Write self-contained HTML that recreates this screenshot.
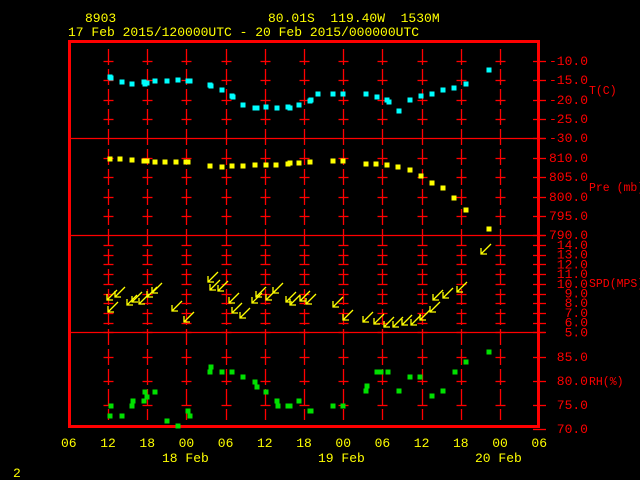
<!DOCTYPE html>
<html><head><meta charset="utf-8"><style>
html,body{margin:0;padding:0;background:#000;width:640px;height:480px;overflow:hidden}
svg{display:block}
text{font-family:"Liberation Mono",monospace;font-size:13px}
.y{fill:#ffff00}.r{fill:#ff0000}
</style></head><body>
<svg width="640" height="480" viewBox="0 0 640 480" xmlns="http://www.w3.org/2000/svg">
<rect width="640" height="480" fill="#000"/>
<text x="85" y="22" class="y">8903</text>
<text x="268" y="22" class="y" xml:space="preserve">80.01S  119.40W  1530M</text>
<text x="68" y="36" class="y">17 Feb 2015/120000UTC - 20 Feb 2015/000000UTC</text>
<g id="grid" stroke="#ff0000" stroke-width="1.3"></g>
<rect x="69.5" y="41.5" width="469" height="385" fill="none" stroke="#ff0000" stroke-width="3"/>
<g stroke="#ff0000" stroke-width="1.3">
<line x1="69" y1="138.5" x2="545" y2="138.5"/>
<line x1="69" y1="235.5" x2="545" y2="235.5"/>
<line x1="69" y1="332.5" x2="545" y2="332.5"/>
</g>
<g id="lab" class="r" style="font-size:11.5px" text-anchor="end"></g>
<text x="589" y="94" class="r" style="font-size:11.5px">T(C)</text>
<text x="589" y="191" class="r" style="font-size:11.5px">Pre (mb)</text>
<text x="589" y="287" class="r" style="font-size:11.5px">SPD(MPS)</text>
<text x="589" y="385" class="r" style="font-size:11.5px">RH(%)</text>
<g id="hrs" class="y"></g>
<text x="162" y="462" class="y">18 Feb</text>
<text x="318" y="462" class="y">19 Feb</text>
<text x="475" y="462" class="y">20 Feb</text>
<text x="13" y="477" class="y">2</text>
<g id="pts"></g>
<g id="wind" stroke="#ffff00" stroke-width="1.3" fill="none"></g>
<script>
var NS="http://www.w3.org/2000/svg";
function el(p,t,a,txt){var e=document.createElementNS(NS,t);for(var k in a)e.setAttribute(k,a[k]);if(txt!==undefined)e.textContent=txt;p.appendChild(e);return e;}
var g=document.getElementById('grid');
var xs=[];for(var i=0;i<11;i++)xs.push(Math.round(108+39.2*i)+0.5);
var ys=[];
[61,80,100,119,158,177,197,216].forEach(function(y){ys.push(y)});
for(var i=0;i<10;i++)ys.push(245+i*9.7);
[357,381,405].forEach(function(y){ys.push(y)});
xs.forEach(function(x){
 el(g,'line',{x1:x,y1:49,x2:x,y2:420,'stroke-dasharray':'16 4'});
 ys.forEach(function(y){el(g,'line',{x1:x-5,y1:Math.round(y)+.5,x2:x+5,y2:Math.round(y)+.5});});
});
var allTicks=[61,80,100,119,138,158,177,197,216,235];for(var i=1;i<10;i++)allTicks.push(245+ (i-1)*9.7);
allTicks=allTicks.concat([332,357,381,405,429]);
allTicks.forEach(function(y){el(g,'line',{x1:533,y1:Math.round(y)+.5,x2:546,y2:Math.round(y)+.5});});
var lab=document.getElementById('lab');
var L=[[61,'-10.0'],[80,'-15.0'],[100,'-20.0'],[119,'-25.0'],[138,'-30.0'],[158,'810.0'],[177,'805.0'],[197,'800.0'],[216,'795.0'],[235,'790.0']];
for(var i=0;i<10;i++)L.push([245+i*9.7,(14-i)+'.0']);
L=L.concat([[357,'85.0'],[381,'80.0'],[405,'75.0'],[429,'70.0']]);
L.forEach(function(a){el(lab,'text',{x:588,y:a[0]+4},a[1]);});
var h=document.getElementById('hrs');
['06','12','18','00','06','12','18','00','06','12','18','00','06'].forEach(function(t,i){el(h,'text',{x:61+39.2*i,y:447},t);});
var P=document.getElementById('pts');
function sq(arr,c){arr.forEach(function(p){el(P,'rect',{x:p[0]-2.5,y:p[1]-2.5,width:5,height:5,fill:c});});}
sq([[110,77],[111,78],[122,82],[132,84],[144,82],[145,84],[147,83],[155,81],[167,81],[178,80],[188,81],[190,81],[210,85],[211,86],[222,90],[232,96],[233,97],[243,105],[255,108],[257,108],[266,107],[277,108],[288,107],[290,108],[299,105],[310,101],[311,100],[318,94],[333,94],[343,94],[366,94],[377,97],[387,100],[389,102],[399,111],[410,100],[421,96],[432,94],[443,90],[454,88],[466,84],[489,70]],'#00ffff');
sq([[110,159],[120,159],[132,160],[144,161],[147,161],[155,162],[165,162],[176,162],[186,162],[188,162],[210,166],[222,167],[232,166],[243,166],[255,165],[266,165],[276,165],[288,164],[290,163],[299,163],[310,162],[333,161],[343,161],[366,164],[376,164],[387,165],[398,167],[410,170],[421,176],[432,183],[443,188],[454,198],[466,210],[489,229]],'#ffff00');
sq([[111,406],[110,416],[122,416],[132,406],[133,401],[144,401],[145,392],[147,397],[155,392],[167,421],[178,426],[188,411],[190,416],[211,367],[210,372],[222,372],[232,372],[243,377],[255,382],[257,387],[266,392],[277,401],[278,406],[288,406],[290,406],[299,401],[310,411],[311,411],[333,406],[343,406],[366,391],[367,386],[377,372],[381,372],[388,372],[399,391],[410,377],[420,377],[432,396],[443,391],[455,372],[466,362],[489,352]],'#00e000');
var W=document.getElementById('wind');
[[107,300],[115,297],[108,312],[127,305],[132,302],[139,304],[147,297],[152,293],[172,311],[184,322],[208,282],[210,290],[218,291],[229,303],[232,313],[240,318],[252,303],[256,297],[266,300],[273,293],[286,302],[290,305],[300,301],[306,304],[333,307],[343,320],[363,322],[374,324],[384,327],[393,327],[402,325],[411,325],[420,320],[430,312],[433,300],[443,298],[457,292],[481,254]].forEach(function(p){
 var x=p[0],y=p[1];
 el(W,'path',{d:'M'+(x+10)+' '+(y-10)+' L'+x+' '+y+' M'+x+' '+(y-6)+' L'+x+' '+y+' L'+(x+6)+' '+y});
});
</script>
</svg>
</body></html>
